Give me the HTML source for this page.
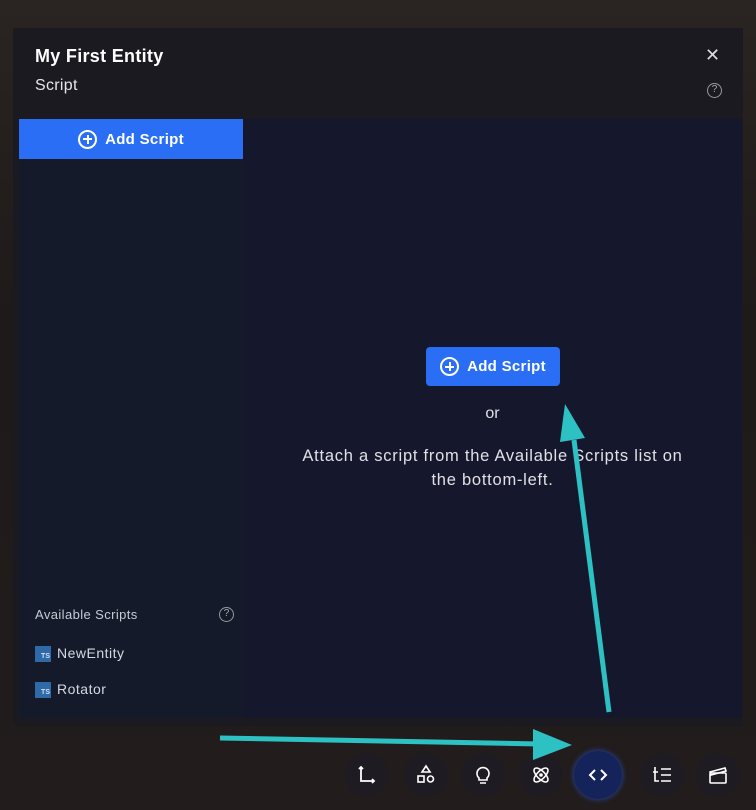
<!DOCTYPE html>
<html><head><style>
*{margin:0;padding:0;box-sizing:border-box}
body{width:756px;height:810px;overflow:hidden;background:#241f1e;font-family:"Liberation Sans",sans-serif;position:relative;color:#fff}
.bg{position:absolute;inset:0;background:linear-gradient(180deg,#2a2422 0%,#1e1a19 40%,#221d1c 100%)}
.modal{position:absolute;left:13px;top:28px;width:730px;height:698px;background:#1b1a20}
.t1{position:absolute;left:35px;top:46px;font-size:18px;font-weight:bold;letter-spacing:0.3px}
.t2{position:absolute;left:35px;top:77px;font-size:16px;color:#e6e6ea;letter-spacing:0.3px}
.x{position:absolute;left:705px;top:45px;font-size:18px;color:#ddd}
.q{position:absolute;width:15px;height:15px;border:1.5px solid #999;border-radius:50%;font-size:10px;color:#aaa;text-align:center;line-height:12px}
.left{position:absolute;left:19px;top:119px;width:224px;height:599px;background:#151a2b}
.right{position:absolute;left:243px;top:119px;width:499px;height:599px;background:#15182c}
.btn{position:absolute;background:#2a6ef6;color:#fff;font-size:15px;font-weight:bold;display:flex;align-items:center;justify-content:center;gap:8px;letter-spacing:0.3px}
.plus{width:19px;height:19px;border:2px solid #fff;border-radius:50%;position:relative}
.plus:before{content:"";position:absolute;left:6.5px;top:3px;width:2px;height:9px;background:#fff}
.plus:after{content:"";position:absolute;left:3px;top:6.5px;width:9px;height:2px;background:#fff}
.ts{display:inline-block;width:16px;height:16px;background:#2f6aa8;color:#cfe0f5;font-size:7px;font-weight:bold;vertical-align:middle;text-align:right;padding:7px 1px 0 0;margin-right:6px;line-height:8px;letter-spacing:0}
.item{position:absolute;left:35px;font-size:14px;color:#d6d8e0;letter-spacing:0.5px}
.ib{position:absolute;top:753px;width:44px;height:44px;border-radius:50%;background:#1e1c22;display:flex;align-items:center;justify-content:center}
</style></head><body>
<div class="bg"></div>
<div class="modal"></div>
<div class="t1">My First Entity</div>
<div class="t2">Script</div>
<div class="x">✕</div>
<div class="q" style="left:707px;top:83px">?</div>
<div class="left"></div>
<div class="right"></div>
<div class="btn" style="left:19px;top:119px;width:224px;height:40px"><span class="plus"></span>Add Script</div>
<div class="btn" style="left:426px;top:347px;width:134px;height:39px;border-radius:4px"><span class="plus"></span>Add Script</div>
<div style="position:absolute;left:243px;width:499px;top:405px;text-align:center;font-size:16px;color:#e0e0e6">or</div>
<div style="position:absolute;left:243px;width:499px;top:444px;text-align:center;font-size:16.5px;line-height:24px;color:#e0e0e6;letter-spacing:0.75px">Attach a script from the Available Scripts list on<br>the bottom-left.</div>
<div style="position:absolute;left:35px;top:607px;font-size:13px;color:#c8cad4;letter-spacing:0.4px">Available Scripts</div>
<div class="q" style="left:219px;top:607px">?</div>
<div class="item" style="top:645px"><span class="ts">TS</span>NewEntity</div>
<div class="item" style="top:681px"><span class="ts">TS</span>Rotator</div>
<div class="ib" style="left:345px"><svg width="22" height="22" fill="none" stroke="#fff" stroke-width="1.8"><path d="M5 3v14h13M3 5l2-2 2 2M16 15l2 2-2 2"/></svg></div>
<div class="ib" style="left:404px"><svg width="22" height="22" fill="none" stroke="#fff" stroke-width="1.6"><path d="M11 2l4 6H7z"/><rect x="3" y="12" width="6" height="6"/><circle cx="15.5" cy="15" r="3"/></svg></div>
<div class="ib" style="left:461px"><svg width="22" height="22" fill="none" stroke="#fff" stroke-width="1.6"><path d="M7 14a6 6 0 1 1 8 0v2H7z M8 19h6"/></svg></div>
<div class="ib" style="left:519px"><svg width="22" height="22" fill="none" stroke="#fff" stroke-width="1.6"><ellipse cx="11" cy="11" rx="9" ry="4" transform="rotate(45 11 11)"/><ellipse cx="11" cy="11" rx="9" ry="4" transform="rotate(-45 11 11)"/><circle cx="11" cy="11" r="1" fill="#fff"/></svg></div>
<div class="ib" style="left:574px;top:751px;width:48px;height:48px;background:#14245a;box-shadow:0 0 6px #2a4ab0"><svg width="22" height="22" fill="none" stroke="#fff" stroke-width="2"><path d="M8 6l-5 5 5 5M14 6l5 5-5 5"/></svg></div>
<div class="ib" style="left:640px"><svg width="22" height="22" fill="none" stroke="#fff" stroke-width="1.6"><path d="M4 3v14h4M2 8h5M10 5h10M10 11h10M10 17h10"/></svg></div>
<div class="ib" style="left:696px"><svg width="22" height="22" fill="none" stroke="#fff" stroke-width="1.6"><rect x="3" y="9" width="16" height="10" rx="1"/><path d="M3 8l15-4 1 3-15 4z"/></svg></div>
<svg style="position:absolute;left:0;top:0" width="756" height="810">
<path d="M220 738L540 744" stroke="#2ec1c4" stroke-width="5"/>
<path d="M533 729L572 745L533 760z" fill="#2ec1c4"/>
<path d="M609 712L574 440" stroke="#2ec1c4" stroke-width="5"/>
<path d="M560 442L565 404L585 438z" fill="#2ec1c4"/>
</svg>
</body></html>
